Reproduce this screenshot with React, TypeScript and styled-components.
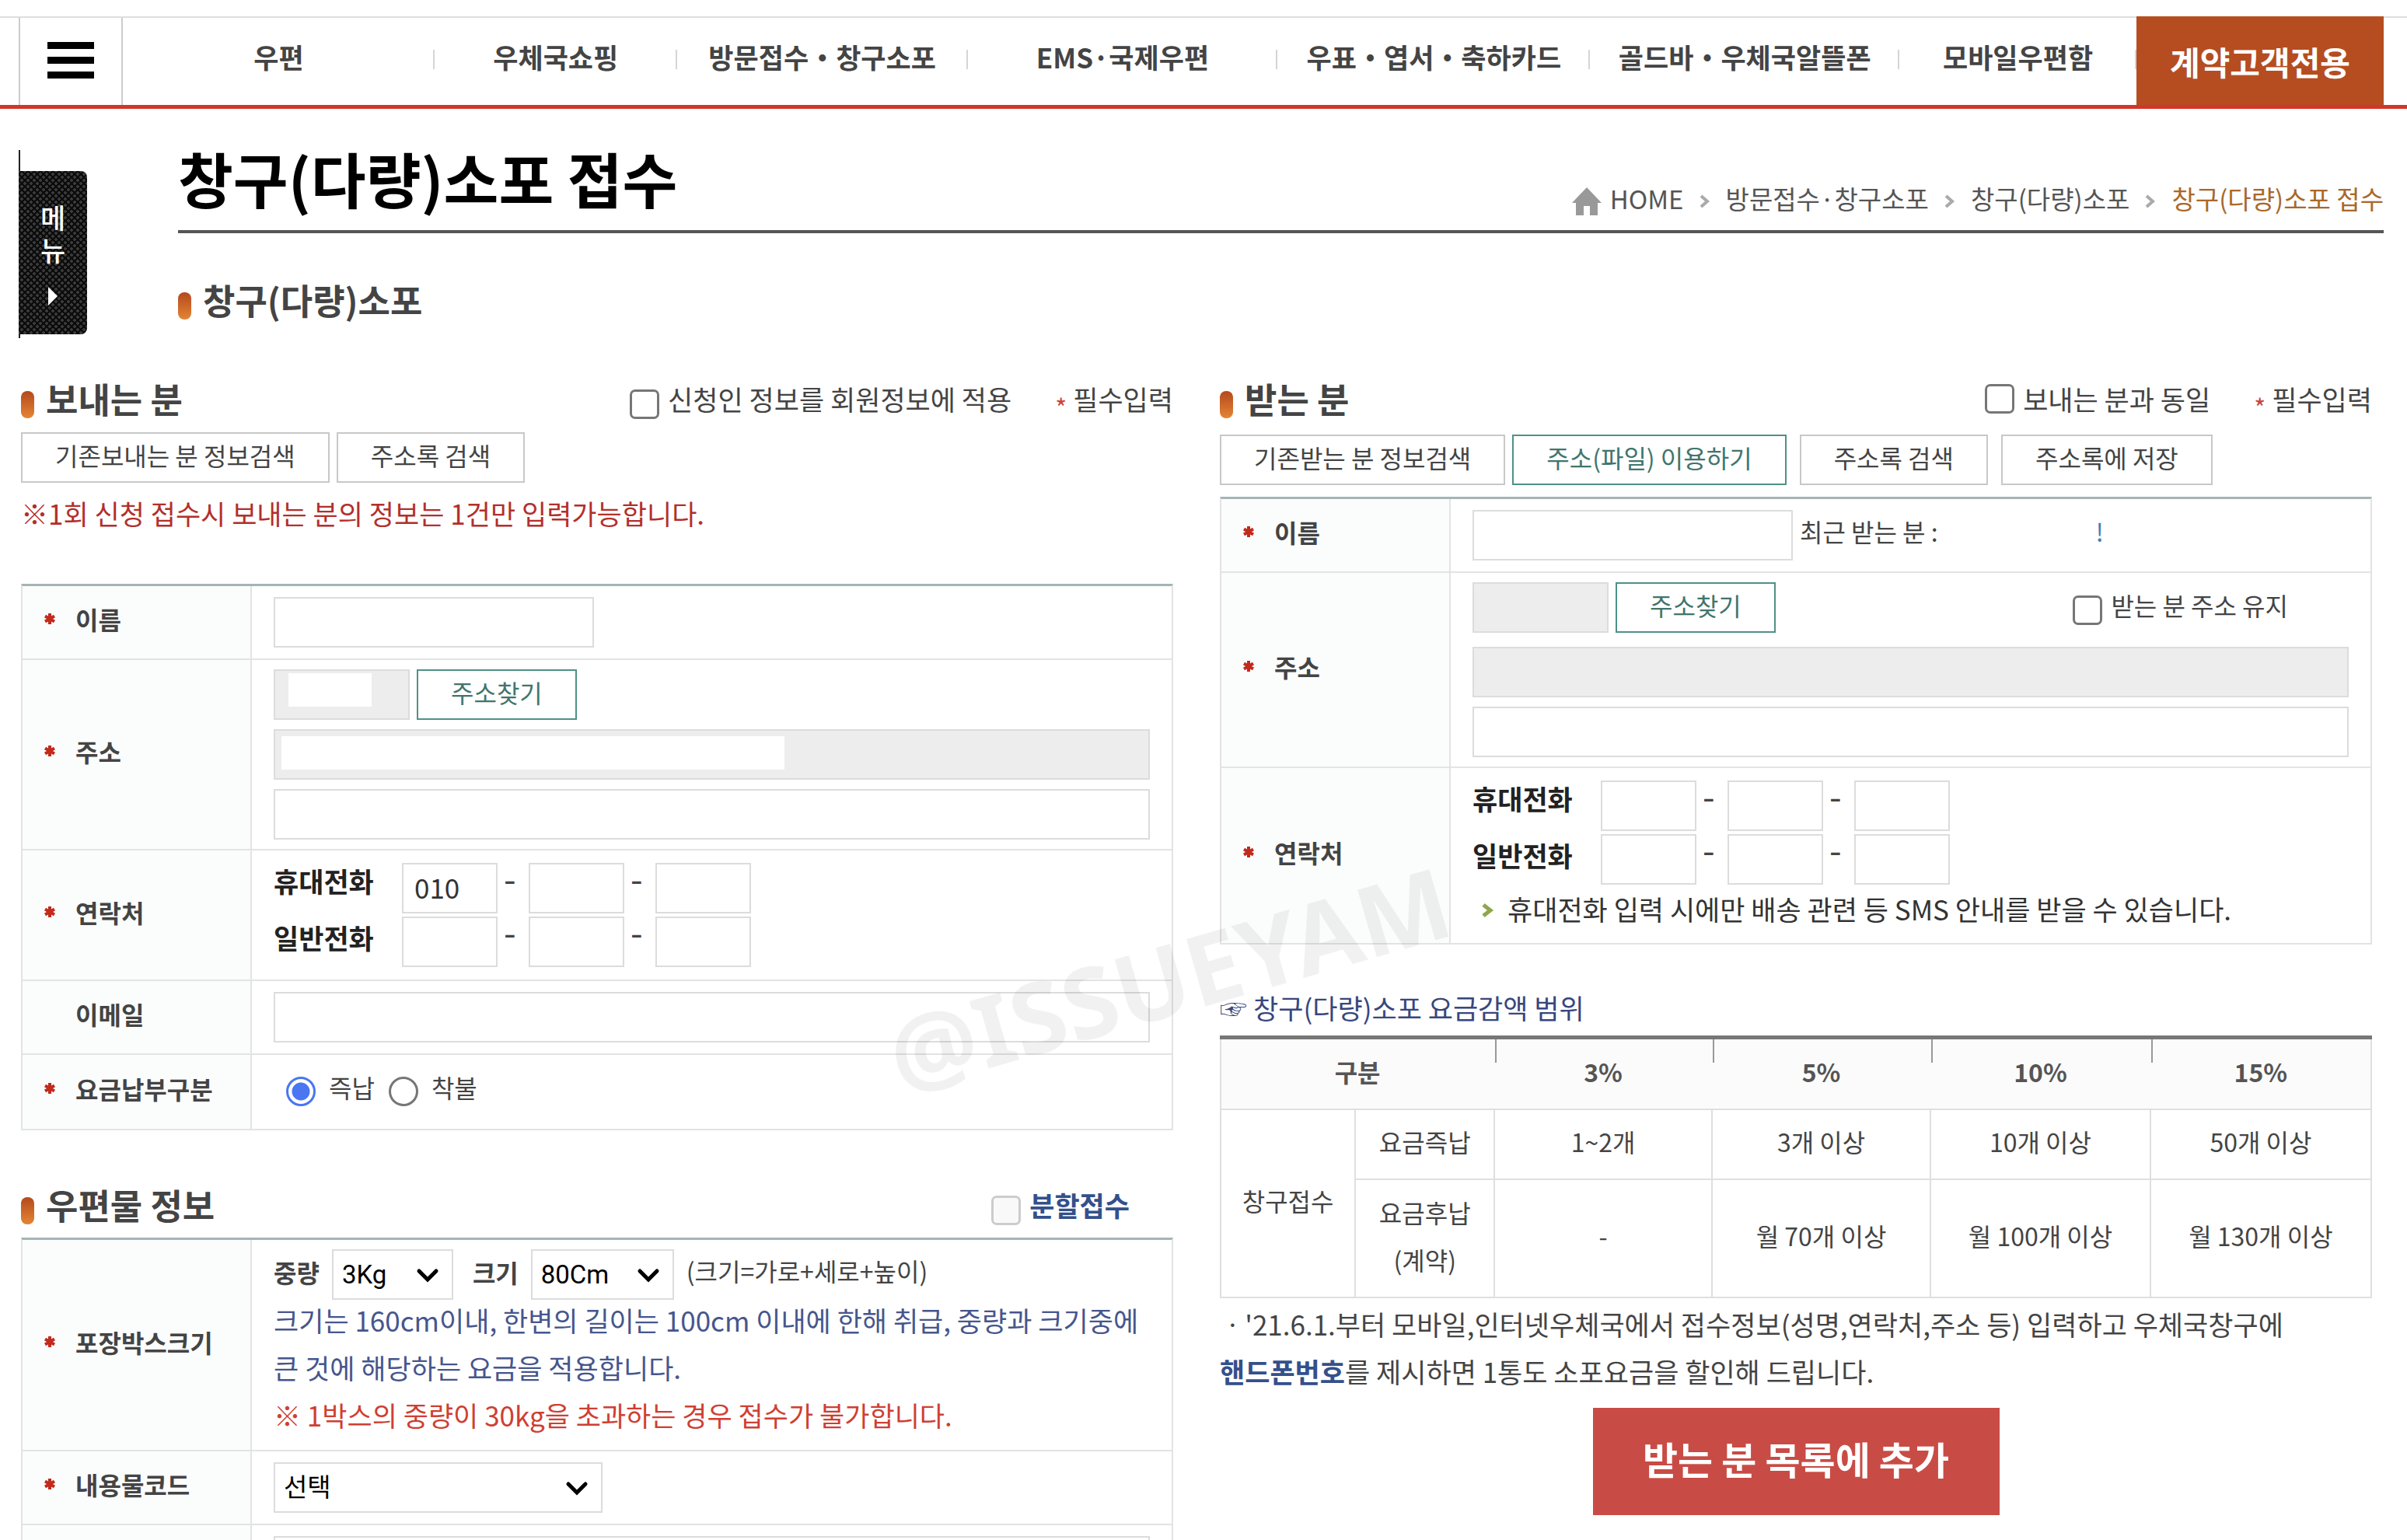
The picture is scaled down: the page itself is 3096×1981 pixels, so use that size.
import React from "react";
import styled, { createGlobalStyle, css } from "styled-components";

const GlobalStyle = createGlobalStyle`
  *, *::before, *::after { box-sizing: border-box; }
  html, body { margin: 0; padding: 0; background: #fff; }
  body, button, input, select {
    font-family: "Noto Sans CJK KR", "Noto Sans", sans-serif;
    color: #444;
  }
  body { font-size: 32px; word-break: keep-all; }
  h1, h2, p { margin: 0; }
  a { color: inherit; text-decoration: none; }
`;

const Page = styled.div`
  position: relative;
  height: 100vh;
  overflow: hidden;
`;

/* ---------- top navigation ---------- */

const TopBar = styled.header`
  display: flex;
  height: 119px;
  margin-top: 21px;
  padding: 0 30px 0 24px;
  background:
    linear-gradient(#ddd, #ddd) top / 100% 2px no-repeat,
    linear-gradient(#d2362a, #d2362a) bottom / 100% 5px no-repeat;
`;

const MenuButton = styled.button`
  display: flex;
  flex-direction: column;
  justify-content: center;
  align-items: center;
  gap: 10px;
  width: 134px;
  margin: 2px 0 5px;
  padding: 0 0 4px;
  border: solid #ccc;
  border-width: 0 2px;
  background: none;

  span {
    width: 60px;
    height: 9px;
    background: #000;
  }
`;

const NavList = styled.ul`
  display: grid;
  grid-template-columns: 401fr 312fr 374fr 399fr 402fr 398fr 305fr;
  flex: 1;
  margin: 0;
  padding: 0;
  list-style: none;
`;

const NavItem = styled.li`
  background: linear-gradient(#d5d5d5, #d5d5d5) right 43px / 2px 25px no-repeat;
  text-align: center;

  a {
    display: block;
    font-size: 35px;
    font-weight: 700;
    line-height: 104px;
    white-space: nowrap;
  }
`;

const ContractLink = styled.a`
  width: 318px;
  height: 114px;
  background: #b64d20;
  color: #fff;
  font-size: 42px;
  font-weight: 700;
  line-height: 116px;
  text-align: center;
`;

/* ---------- page head ---------- */

const PageHead = styled.div`
  display: flex;
  gap: 117px;
  padding: 0 30px 0 24px;
  margin-bottom: 47px;
`;

const SideTab = styled.div`
  width: 88px;
  margin-top: 53px;
  padding: 27px 0 5px;
  background: linear-gradient(#222, #222) left / 2px 100% no-repeat;
`;

const SideTabButton = styled.button`
  display: flex;
  flex-direction: column;
  align-items: center;
  width: 88px;
  height: 210px;
  padding: 38px 0 0;
  border: 0;
  border-radius: 0 8px 8px 0;
  background-color: #0c0c0c;
  background-image:
    radial-gradient(circle, #3a3a3a 2px, transparent 2px),
    radial-gradient(circle, #3a3a3a 2px, transparent 2px);
  background-size: 8px 8px;
  background-position: 0 0, 4px 4px;
  color: #fff;
  font-size: 35px;
  font-weight: 500;
  line-height: 42px;

  span { width: 35px; word-break: break-all; }
  svg { width: 12px; height: 24px; margin-top: 27px; }
`;

const HeadMain = styled.div`
  flex: 1;
`;

const TitleRow = styled.div`
  display: flex;
  justify-content: space-between;
  align-items: flex-end;
  padding: 34px 0 12px;
  border-bottom: 4px solid #555;
  margin-bottom: 55px;
`;

const Title = styled.h1`
  color: #000;
  font-size: 77px;
  font-weight: 700;
  line-height: 110px;
`;

const Crumbs = styled.nav`
  display: flex;
  align-items: center;
  font-size: 33px;
  line-height: 58px;
  color: #555;

  svg.home { width: 38px; height: 36px; margin: 8px 11px 0 0; }
  svg.sep { width: 14px; height: 18px; margin: 8px 20px 0; }
`;

const CurrentCrumb = styled.span`
  color: #a9682a;
`;

const Heading = styled.h2`
  display: flex;
  align-items: center;
  gap: 15px;
  font-size: 45px;
  font-weight: 700;
  line-height: 62px;

  &::before {
    content: "";
    width: 17px;
    height: 35px;
    margin-top: 14px;
    border-radius: 8px;
    background: linear-gradient(#b4491d, #e48535);
  }
`;

/* ---------- form columns ---------- */

const Columns = styled.main`
  display: grid;
  grid-template-columns: 1fr 1fr;
  gap: 60px;
  padding: 0 45px 0 27px;
`;

const Column = styled.section`
  min-width: 0;
`;

const SectionHead = styled.div<{ $gap: number }>`
  display: flex;
  align-items: center;
  gap: 56px;
  margin-bottom: ${(p) => p.$gap}px;

  ${Heading} { margin-right: auto; }
`;

const CheckLabel = styled.label<{ $bold?: boolean; $small?: boolean }>`
  display: flex;
  align-items: center;
  gap: 11px;
  font-size: ${(p) => (p.$small ? 32 : 35)}px;
  line-height: 62px;
  ${(p) => p.$bold && css`
    margin-right: 56px;
    color: #34508c;
    font-weight: 700;
  `}
`;

const Check = styled.input.attrs({ type: "checkbox" })<{ $low?: boolean }>`
  appearance: none;
  width: 38px;
  height: 38px;
  margin: ${(p) => (p.$low ? 14 : 0)}px 0 0;
  border: 3px solid #767676;
  border-radius: 7px;
  background: #fff;

  &:disabled { border-color: #ccc; background: #f9f9f9; }
`;

const Required = styled.span`
  display: flex;
  align-items: center;
  gap: 8px;
  font-size: 35px;
  line-height: 62px;
`;

const ThinStar = styled.span`
  padding-top: 20px;
  color: #c8453c;
  font-size: 32px;
  line-height: 36px;
`;

const ButtonRow = styled.div<{ $bottom: number }>`
  display: flex;
  gap: 9px;
  margin-bottom: ${(p) => p.$bottom}px;
`;

const ButtonGroup = styled.div`
  display: flex;
  gap: 17px;
`;

const BoxButton = styled.button<{ $green?: boolean }>`
  height: 65px;
  padding: 0 42px 7px;
  border: 2px solid ${(p) => (p.$green ? "#4f9186" : "#c8c8c8")};
  background: #fff;
  color: ${(p) => (p.$green ? "#41756d" : "#444")};
  font-size: 32px;
  line-height: 54px;
  white-space: nowrap;
`;

const Notice = styled.p`
  margin-bottom: 61px;
  color: #b32f2c;
  font-size: 35px;
  line-height: 61px;
`;

const FormTable = styled.div<{ $bottom?: number }>`
  margin-bottom: ${(p) => p.$bottom ?? 0}px;
  border: solid #e3e3e3;
  border-width: 0 2px;
  border-top: 3px solid #a5b4b5;
`;

const Row = styled.div`
  display: grid;
  grid-template-columns: 295px 1fr;
  border-bottom: 2px solid #e3e3e3;
`;

const RowHead = styled.div`
  display: flex;
  align-items: center;
  gap: 25px;
  padding: 0 0 9px 27px;
  border-right: 2px solid #e3e3e3;
  background: #fbfdfd;
  font-size: 32px;
  font-weight: 700;
`;

const Star = styled.svg`
  width: 16px;
  height: 16px;
`;

const StarSpace = styled.span`
  width: 16px;
`;

const RowBody = styled.div<{ $pad: number; $gap?: number }>`
  display: flex;
  flex-direction: column;
  gap: ${(p) => p.$gap ?? 0}px;
  padding: ${(p) => p.$pad}px 28px;
`;

const Line = styled.div<{ $gap?: number; $bottom?: number }>`
  display: flex;
  align-items: center;
  gap: ${(p) => p.$gap ?? 9}px;
  margin-bottom: ${(p) => p.$bottom ?? 0}px;
`;

const TextBox = styled.input<{ $w?: number }>`
  width: ${(p) => (p.$w ? `${p.$w}px` : "100%")};
  height: 65px;
  padding: 0 14px 4px;
  border: 2px solid #dcdcdc;
  border-radius: 0;
  background: #fff;
  color: #333;
  font-size: 35px;

  &:read-only { background: #ededed; }
`;

const Masked = styled.div`
  position: relative;
  display: flex;
`;

const Mask = styled.span<{ $left: number; $top: number; $w: number }>`
  position: absolute;
  left: ${(p) => p.$left}px;
  top: ${(p) => p.$top}px;
  width: ${(p) => p.$w}px;
  height: 43px;
  background: #fff;
`;

const SmallText = styled.span`
  padding-bottom: 11px;
  font-size: 32px;
  white-space: pre;
`;

const RecentMark = styled.a`
  margin-left: 194px;
  padding-bottom: 11px;
  color: #3f7fb5;
  font-size: 32px;
`;

const KeepAddress = styled.div`
  margin: -8px 78px 0 auto;
`;

const Phones = styled.div`
  display: flex;
`;

const PhoneLabels = styled.div`
  display: flex;
  flex-direction: column;
  gap: 27px;
  width: 165px;

  label {
    color: #222;
    font-size: 35px;
    font-weight: 700;
    line-height: 46px;
  }
`;

const PhoneInputs = styled.div`
  display: grid;
  grid-template-columns: 123px 40px 123px 40px 123px;
  row-gap: 4px;
`;

const Dash = styled.span`
  padding-left: 8px;
  font-size: 45px;
  line-height: 38px;
`;

const SmsNote = styled.p`
  display: flex;
  align-items: center;
  gap: 17px;
  padding-left: 12px;
  margin-bottom: -2px;
  color: #333;
  font-size: 35px;
  line-height: 61px;

  svg { width: 16px; height: 18px; margin-top: 4px; }
`;

const RadioLine = styled.div`
  display: flex;
  align-items: center;
  gap: 18px;
  height: 95px;
  padding-left: 16px;

  label {
    display: flex;
    align-items: center;
    gap: 17px;
    font-size: 32px;
    line-height: 60px;
    padding-bottom: 13px;
  }
`;

const Radio = styled.input.attrs({ type: "radio" })`
  appearance: none;
  width: 38px;
  height: 38px;
  margin: 12px 0 0;
  border: 3px solid #767676;
  border-radius: 50%;
  background: #fff;

  &:checked {
    border-color: #4a76f3;
    background: radial-gradient(circle, #4a76f3 11px, #fff 12px);
  }
`;

const SelectWrap = styled.span<{ $w: number }>`
  position: relative;
  display: block;
  width: ${(p) => p.$w}px;

  select {
    appearance: none;
    width: 100%;
    height: 65px;
    padding: 0 0 0 11px;
    border: 2px solid #dcdcdc;
    border-radius: 0;
    background: #fff;
    color: #000;
    font-family: Roboto, "Noto Sans CJK KR", sans-serif;
    font-size: 33px;
  }

  svg {
    position: absolute;
    right: 18px;
    top: 24px;
    width: 30px;
    height: 20px;
    pointer-events: none;
  }
`;

const FieldLabel = styled.label<{ $left?: number }>`
  margin-left: ${(p) => p.$left ?? 0}px;
  padding-bottom: 8px;
  font-size: 32px;
  font-weight: 700;
`;

const Help = styled.p<{ $red?: boolean }>`
  color: ${(p) => (p.$red ? "#cf3f33" : "#46568d")};
  font-size: 35px;
  line-height: 61px;
`;

const HelpBlock = styled.div`
  margin: -5px 0 3px;
`;

/* ---------- fee table ---------- */

const FeeTitle = styled.p`
  display: flex;
  gap: 8px;
  margin: 50px 0 6px;
  color: #37477e;
  font-size: 35px;
  line-height: 61px;
`;

const FeeTable = styled.table`
  width: 100%;
  table-layout: fixed;
  border-collapse: collapse;
  border-top: 5px solid #777;
  font-size: 32px;
  text-align: center;

  th, td {
    padding: 0 0 6px;
    border: 2px solid #dfdfdf;
    font-weight: 400;
    line-height: 61px;
  }

  thead th {
    height: 92px;
    border-top-color: #777;
    border-left-color: transparent;
    border-right-color: transparent;
    color: #555;
    font-weight: 700;
    background-color: #fbfbfb;
  }

  thead th + th {
    background: #fbfbfb linear-gradient(#999, #999) left top / 2px 30px no-repeat;
  }

  thead th:first-child { border-left-color: #dfdfdf; }
  thead th:last-child { border-right-color: #dfdfdf; }
`;

const FeeRow = styled.tr<{ $h: number }>`
  height: ${(p) => p.$h}px;
`;

const FeeNote = styled.p`
  margin: 2px 0 17px;
  font-size: 35px;
  line-height: 61px;

  strong { color: #34508c; }
`;

const AddButton = styled.button`
  display: block;
  width: 523px;
  height: 138px;
  margin: 0 auto;
  padding: 0 0 8px;
  border: 0;
  background: #c84c45;
  color: #fff;
  font-size: 49px;
  font-weight: 700;
`;

const Watermark = styled.div`
  position: absolute;
  left: 1131px;
  top: 1172px;
  color: rgba(0, 0, 0, 0.055);
  font-family: "Noto Sans", "Open Sans", sans-serif;
  font-size: 126px;
  font-weight: 700;
  line-height: 170px;
  transform: rotate(-16deg);
  pointer-events: none;
`;

/* ---------- small parts ---------- */

const RequiredStar = () => (
  <Star viewBox="0 0 16 16" aria-hidden="true">
    <path d="M8 1v14M2 4.5l12 7M14 4.5l-12 7" stroke="#c22a1c" strokeWidth="4" />
  </Star>
);

const Label = ({ text, optional, htmlFor }: { text?: string; optional?: boolean; htmlFor?: string }) => (
  <RowHead>
    {optional ? <StarSpace /> : <RequiredStar />}
    {htmlFor ? <label htmlFor={htmlFor}>{text}</label> : <span>{text}</span>}
  </RowHead>
);

const CrumbSep = () => (
  <svg className="sep" viewBox="0 0 14 18" aria-hidden="true">
    <path d="M2 2l8 7-8 7" fill="none" stroke="#aaa" strokeWidth="4" />
  </svg>
);

const SelectBox = ({ id, w, value, label }: { id: string; w: number; value: string; label?: string }) => (
  <SelectWrap $w={w}>
    <select id={id} aria-label={label}>
      <option>{value}</option>
    </select>
    <svg viewBox="0 0 30 20" aria-hidden="true">
      <path d="M4 4l11 11L26 4" fill="none" stroke="#000" strokeWidth="5" strokeLinecap="round" />
    </svg>
  </SelectWrap>
);

const PhoneFields = ({ prefix, first }: { prefix: string; first?: string }) => (
  <Phones>
    <PhoneLabels>
      <label htmlFor={`${prefix}-mobile-1`}>휴대전화</label>
      <label htmlFor={`${prefix}-home-1`}>일반전화</label>
    </PhoneLabels>
    <PhoneInputs>
      {[["mobile", "휴대전화"], ["home", "일반전화"]].map(([kind, name]) =>
        [1, 2, 3].map((n) => (
          <React.Fragment key={kind + n}>
            {n > 1 && <Dash>-</Dash>}
            <TextBox
              id={`${prefix}-${kind}-${n}`}
              aria-label={`${name} ${n}`}
              defaultValue={kind === "mobile" && n === 1 ? first : undefined}
            />
          </React.Fragment>
        ))
      )}
    </PhoneInputs>
  </Phones>
);

const RequiredNote = () => (
  <Required>
    <ThinStar>*</ThinStar>
    <span>필수입력</span>
  </Required>
);

const NAV = [
  "우편",
  "우체국쇼핑",
  "방문접수・창구소포",
  "EMS·국제우편",
  "우표・엽서・축하카드",
  "골드바・우체국알뜰폰",
  "모바일우편함",
];

export default function App() {
  return (
    <Page>
      <GlobalStyle />
      <TopBar>
        <MenuButton aria-label="전체메뉴">
          <span />
          <span />
          <span />
        </MenuButton>
        <NavList>
          {NAV.map((name) => (
            <NavItem key={name}>
              <a href="#">{name}</a>
            </NavItem>
          ))}
        </NavList>
        <ContractLink href="#">계약고객전용</ContractLink>
      </TopBar>

      <PageHead>
        <SideTab>
          <SideTabButton>
            <span>메뉴</span>
            <svg viewBox="0 0 12 24" aria-hidden="true">
              <path d="M0 0l12 12L0 24z" fill="#fff" />
            </svg>
          </SideTabButton>
        </SideTab>
        <HeadMain>
          <TitleRow>
            <Title>창구(다량)소포 접수</Title>
            <Crumbs>
              <svg className="home" viewBox="0 0 38 36" aria-hidden="true">
                <path d="M19 0L38 20H33V36H23V24H15V36H5V20H0z" fill="#999" />
              </svg>
              <a href="#">HOME</a>
              <CrumbSep />
              <a href="#">방문접수·창구소포</a>
              <CrumbSep />
              <a href="#">창구(다량)소포</a>
              <CrumbSep />
              <CurrentCrumb>창구(다량)소포 접수</CurrentCrumb>
            </Crumbs>
          </TitleRow>
          <Heading>창구(다량)소포</Heading>
        </HeadMain>
      </PageHead>

      <Columns>
        <Column>
          <SectionHead $gap={12}>
            <Heading>보내는 분</Heading>
            <CheckLabel>
              <Check $low />
              신청인 정보를 회원정보에 적용
            </CheckLabel>
            <RequiredNote />
          </SectionHead>
          <ButtonRow $bottom={8}>
            <BoxButton>기존보내는 분 정보검색</BoxButton>
            <BoxButton>주소록 검색</BoxButton>
          </ButtonRow>
          <Notice>※1회 신청 접수시 보내는 분의 정보는 1건만 입력가능합니다.</Notice>

          <FormTable $bottom={65}>
            <Row>
              <Label text="이름" htmlFor="s-name" />
              <RowBody $pad={14}>
                <TextBox id="s-name" $w={412} />
              </RowBody>
            </Row>
            <Row>
              <Label text="주소" htmlFor="s-addr" />
              <RowBody $pad={12} $gap={12}>
                <Line>
                  <Masked>
                    <TextBox $w={175} readOnly aria-label="우편번호" />
                    <Mask $left={19} $top={5} $w={107} />
                  </Masked>
                  <BoxButton $green>주소찾기</BoxButton>
                </Line>
                <Masked>
                  <TextBox readOnly aria-label="기본주소" />
                  <Mask $left={10} $top={9} $w={647} />
                </Masked>
                <TextBox id="s-addr" />
              </RowBody>
            </Row>
            <Row>
              <Label text="연락처" />
              <RowBody $pad={16}>
                <PhoneFields prefix="s" first="010" />
              </RowBody>
            </Row>
            <Row>
              <Label text="이메일" optional htmlFor="s-mail" />
              <RowBody $pad={14}>
                <TextBox id="s-mail" />
              </RowBody>
            </Row>
            <Row>
              <Label text="요금납부구분" />
              <RowBody $pad={0}>
                <RadioLine>
                  <label>
                    <Radio name="pay" defaultChecked />
                    즉납
                  </label>
                  <label>
                    <Radio name="pay" />
                    착불
                  </label>
                </RadioLine>
              </RowBody>
            </Row>
          </FormTable>

          <SectionHead $gap={11}>
            <Heading>우편물 정보</Heading>
            <CheckLabel $bold>
              <Check $low disabled />
              분할접수
            </CheckLabel>
          </SectionHead>
          <FormTable>
            <Row>
              <Label text="포장박스크기" />
              <RowBody $pad={12}>
                <Line $gap={16}>
                  <FieldLabel htmlFor="weight">중량</FieldLabel>
                  <SelectBox id="weight" w={156} value="3Kg" />
                  <FieldLabel htmlFor="size" $left={9}>크기</FieldLabel>
                  <SelectBox id="size" w={184} value="80Cm" />
                  <SmallText>(크기=가로+세로+높이)</SmallText>
                </Line>
                <HelpBlock>
                  <Help>
                    크기는 160cm이내, 한변의 길이는 100cm 이내에 한해 취급, 중량과 크기중에
                    큰 것에 해당하는 요금을 적용합니다.
                  </Help>
                  <Help $red>※ 1박스의 중량이 30kg을 초과하는 경우 접수가 불가합니다.</Help>
                </HelpBlock>
              </RowBody>
            </Row>
            <Row>
              <Label text="내용물코드" htmlFor="code" />
              <RowBody $pad={14}>
                <SelectBox id="code" w={423} value="선택" />
              </RowBody>
            </Row>
            <Row>
              <RowHead />
              <RowBody $pad={14}>
                <TextBox aria-label="내용물" />
              </RowBody>
            </Row>
          </FormTable>
        </Column>

        <Column>
          <SectionHead $gap={15}>
            <Heading>받는 분</Heading>
            <CheckLabel>
              <Check />
              보내는 분과 동일
            </CheckLabel>
            <RequiredNote />
          </SectionHead>
          <ButtonRow $bottom={15}>
            <BoxButton>기존받는 분 정보검색</BoxButton>
            <ButtonGroup>
              <BoxButton $green>주소(파일) 이용하기</BoxButton>
              <BoxButton>주소록 검색</BoxButton>
              <BoxButton>주소록에 저장</BoxButton>
            </ButtonGroup>
          </ButtonRow>

          <FormTable>
            <Row>
              <Label text="이름" htmlFor="r-name" />
              <RowBody $pad={14}>
                <Line>
                  <TextBox id="r-name" $w={412} />
                  <SmallText>최근 받는 분 :</SmallText>
                  <RecentMark href="#">!</RecentMark>
                </Line>
              </RowBody>
            </Row>
            <Row>
              <Label text="주소" htmlFor="r-addr" />
              <RowBody $pad={12} $gap={12}>
                <Line $bottom={6}>
                  <TextBox $w={175} readOnly aria-label="우편번호" />
                  <BoxButton $green>주소찾기</BoxButton>
                  <KeepAddress>
                    <CheckLabel $small>
                      <Check $low />
                      받는 분 주소 유지
                    </CheckLabel>
                  </KeepAddress>
                </Line>
                <TextBox readOnly aria-label="기본주소" />
                <TextBox id="r-addr" />
              </RowBody>
            </Row>
            <Row>
              <Label text="연락처" />
              <RowBody $pad={16}>
                <PhoneFields prefix="r" />
                <SmsNote>
                  <svg viewBox="0 0 16 18" aria-hidden="true">
                    <path d="M2 2l9 7-9 7" fill="none" stroke="#8fa64c" strokeWidth="5" />
                  </svg>
                  휴대전화 입력 시에만 배송 관련 등 SMS 안내를 받을 수 있습니다.
                </SmsNote>
              </RowBody>
            </Row>
          </FormTable>

          <FeeTitle>
            <span>☞</span>
            <span>창구(다량)소포 요금감액 범위</span>
          </FeeTitle>
          <FeeTable>
            <colgroup>
              <col style={{ width: "11.7%" }} />
              <col style={{ width: "12.1%" }} />
              <col style={{ width: "18.9%" }} />
              <col style={{ width: "19%" }} />
              <col style={{ width: "19.1%" }} />
              <col style={{ width: "19.2%" }} />
            </colgroup>
            <thead>
              <tr>
                <th colSpan={2}>구분</th>
                <th>3%</th>
                <th>5%</th>
                <th>10%</th>
                <th>15%</th>
              </tr>
            </thead>
            <tbody>
              <FeeRow $h={90}>
                <th rowSpan={2}>창구접수</th>
                <th>요금즉납</th>
                <td>1~2개</td>
                <td>3개 이상</td>
                <td>10개 이상</td>
                <td>50개 이상</td>
              </FeeRow>
              <FeeRow $h={152}>
                <th>
                  요금후납
                  <br />
                  (계약)
                </th>
                <td>-</td>
                <td>월 70개 이상</td>
                <td>월 100개 이상</td>
                <td>월 130개 이상</td>
              </FeeRow>
            </tbody>
          </FeeTable>
          <FeeNote>
            ㆍ'21.6.1.부터 모바일,인터넷우체국에서 접수정보(성명,연락처,주소 등) 입력하고 우체국창구에{" "}
            <strong>핸드폰번호</strong>를 제시하면 1통도 소포요금을 할인해 드립니다.
          </FeeNote>
          <AddButton>받는 분 목록에 추가</AddButton>
        </Column>
      </Columns>
      <Watermark>@ISSUEYAM</Watermark>
    </Page>
  );
}
